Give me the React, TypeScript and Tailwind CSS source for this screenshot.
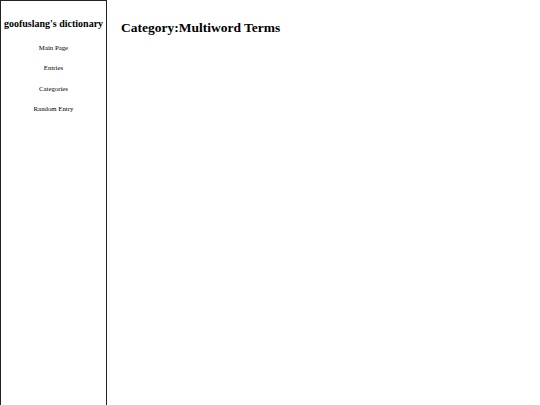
export default function App() {
  return (
    <div className="flex h-[405px] w-[540px] bg-white text-black" style={{ fontFamily: '"Liberation Serif", serif' }}>
      <nav className="flex h-full w-[107px] shrink-0 flex-col items-center border border-b-0 border-[#222]">
        <div className="mt-[15px] whitespace-nowrap text-[10px] font-bold leading-[16px]">goofuslang's dictionary</div>
        <ul className="mt-[10px] flex flex-col items-center gap-[8.3px] text-[6.8px] leading-[12px]">
          <li>Main Page</li>
          <li>Entries</li>
          <li>Categories</li>
          <li>Random Entry</li>
        </ul>
      </nav>
      <main className="flex-1 pl-[14px] pt-[19px]">
        <h1 className="text-[13.5px] font-bold leading-[18px]">Category:Multiword Terms</h1>
      </main>
    </div>
  );
}
